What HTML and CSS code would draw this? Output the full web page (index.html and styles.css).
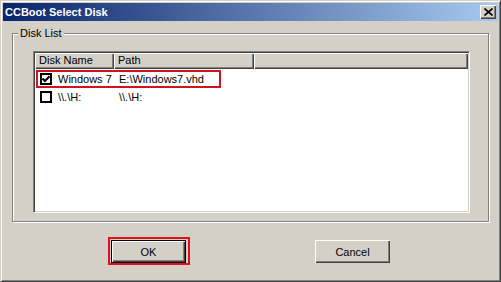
FILE: index.html
```html
<!DOCTYPE html>
<html lang="en">
<head>
<title>CCBoot Select Disk</title>
<meta charset="utf-8" />
<link rel="stylesheet" href="styles.css">
</head>
<body>
<div class="window">
	<div class="titlebar">
		<span class="title">CCBoot Select Disk</span>
		<div class="close">
			<svg width="9" height="8" viewBox="0 0 9 8"><path d="M0.5 0.5 L8.5 7.5 M8.5 0.5 L0.5 7.5" stroke="#000" stroke-width="1.6" fill="none"/></svg>
		</div>
	</div>
	<div class="content">
		<fieldset class="group">
			<legend>Disk List</legend>
			<div class="listview">
				<div class="header">
					<div class="col c1">Disk Name</div>
					<div class="col c2">Path</div>
					<div class="col c3"></div>
				</div>
				<div class="rows">
					<div class="item marked">
						<span class="check"><svg width="8" height="8" viewBox="0 0 8 8"><path d="M0.5 3.5 L3 6 L7.5 1.2" stroke="#000" stroke-width="2" fill="none"/></svg></span>
						<span class="name">Windows 7</span>
						<span class="path">E:\Windows7.vhd</span>
					</div>
					<div class="item">
						<span class="check"></span>
						<span class="name">\\.\H:</span>
						<span class="path">\\.\H:</span>
					</div>
				</div>
			</div>
		</fieldset>
		<div class="buttons">
			<div class="mark"><div class="btn default">OK</div></div>
			<div class="btn cancel">Cancel</div>
		</div>
	</div>
</div>
</body>
</html>
```

FILE: styles.css
```css
body {
	margin: 0;
	padding: 0;
	background: #d4d0c8;
	font-family: "Liberation Sans", Arial, sans-serif;
	font-size: 11px;
	color: #000;
}
.window {
	width: 501px;
	height: 282px;
	box-sizing: border-box;
	border: 1px solid;
	border-color: #d4d0c8 #404040 #404040 #d4d0c8;
	box-shadow: inset 1px 1px #fff, inset -1px -1px #808080;
	padding: 2px;
	background: #d4d0c8;
	display: flex;
	flex-direction: column;
}
.titlebar {
	height: 18px;
	flex: none;
	display: flex;
	align-items: center;
	padding-left: 2px;
	background: linear-gradient(to right, #0a246a, #a6caf0);
	color: #fff;
	font-weight: bold;
}
.close {
	margin-left: auto;
	margin-right: 2px;
	width: 16px;
	height: 14px;
	box-sizing: border-box;
	background: #d4d0c8;
	box-shadow: inset 1px 1px #fff, inset -1px -1px #404040, inset -2px -2px #808080;
	display: flex;
	align-items: center;
	justify-content: center;
}
.content {
	padding: 0 9px;
}
.group {
	width: 477px;
	box-sizing: border-box;
	margin: 6px 0 0 0;
	padding: 0;
	border: 1px solid #808080;
	box-shadow: inset 1px 1px #fff, 1px 1px #fff;
}
.group legend {
	margin-left: 5px;
	padding: 0 2px;
	line-height: 13px;
	background: #d4d0c8;
}
.listview {
	width: 437px;
	height: 162px;
	box-sizing: border-box;
	margin: 11px 0 8px 20px;
	border: 1px solid;
	border-color: #808080 #fff #fff #808080;
	box-shadow: inset 1px 1px #404040, inset -1px -1px #d4d0c8;
	padding: 1px;
	background: #fff;
}
.header {
	display: flex;
	height: 16px;
}
.col {
	box-sizing: border-box;
	height: 16px;
	line-height: 15px;
	padding-left: 4px;
	background: #d4d0c8;
	box-shadow: inset 1px 1px #fff, inset -1px -1px #404040, inset -2px -2px #808080;
}
.c1 { width: 79px; }
.c2 { width: 140px; }
.c3 { flex: 1; }
.rows {
	padding-top: 1px;
}
.item {
	display: flex;
	align-items: center;
	width: 185px;
	height: 18px;
	box-sizing: border-box;
	margin-left: 1px;
	border: 2px solid transparent;
}
.item.marked {
	border-color: #d0141c;
}
.check {
	width: 12px;
	height: 12px;
	box-sizing: border-box;
	margin-left: 2px;
	border: 2px solid #000;
	background: #fff;
	display: flex;
}
.name {
	margin-left: 6px;
	width: 61px;
}
.buttons {
	display: flex;
	align-items: flex-start;
	margin-top: 15px;
}
.mark {
	margin-left: 96px;
	border: 2px solid #e0101a;
	padding: 1px 2px 0 1px;
}
.btn {
	width: 75px;
	height: 23px;
	box-sizing: border-box;
	background: #d4d0c8;
	display: flex;
	align-items: center;
	justify-content: center;
	box-shadow: inset 1px 1px #fff, inset -1px -1px #404040, inset -2px -2px #808080;
}
.btn.default {
	border: 1px solid #000;
}
.cancel {
	margin-left: 125px;
	margin-top: 3px;
}
```
